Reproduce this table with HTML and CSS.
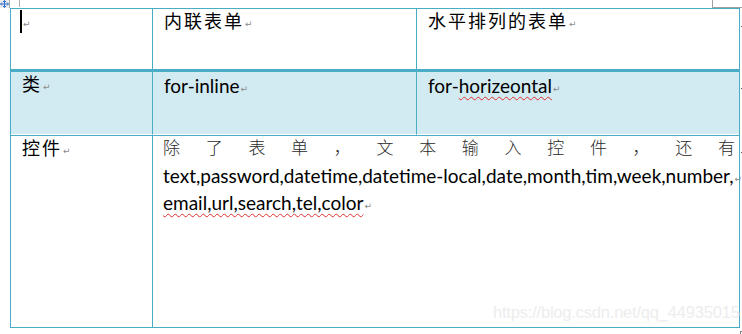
FILE: index.html
```html
<!DOCTYPE html>
<html lang="zh">
<head>
<meta charset="utf-8">
<title>表单</title>
<link rel="stylesheet" href="styles.css">
</head>
<body>
<div class="page">
  <div class="handle">
    <svg width="9" height="8" viewBox="0 0 9 8"><path d="M4.5 0.5 V7.5 M0.5 4 H8.5 M3 2 L4.5 0.5 L6 2 M3 6 L4.5 7.5 L6 6 M2 2.5 L0.5 4 L2 5.5 M7 2.5 L8.5 4 L7 5.5" stroke="#2f6fd0" stroke-width="1" fill="none"/></svg>
  </div>
  <div class="mark-tl"></div>
  <div class="mark-tr"></div>
  <div class="mark-br"></div>
  <div class="grid">
    <div class="cell r1"><span class="caret"></span><span class="pm cpm">↵</span></div>
    <div class="cell r1 cjk">内联表单<span class="pm">↵</span></div>
    <div class="cell r1 last cjk">水平排列的表单<span class="pm">↵</span></div>
    <div class="cell r2 cjk">类<span class="pm">↵</span></div>
    <div class="cell r2 lat">for-inline<span class="pm">↵</span></div>
    <div class="cell r2 last lat">for-<span class="wavy">horizeontal</span><span class="pm">↵</span></div>
    <div class="cell r3 cjk">控件<span class="pm">↵</span></div>
    <div class="cell r3 last wide">
      <div class="just"><span>除</span><span>了</span><span>表</span><span>单</span><span>，</span><span>文</span><span>本</span><span>输</span><span>入</span><span>控</span><span>件</span><span>，</span><span>还</span><span>有</span></div>
      <div class="lat line">text,password,datetime,datetime-local,date,month,tim,week,number,<span class="pm">↵</span></div>
      <div class="lat line"><span class="wavy">email,url,search,tel,color</span><span class="pm">↵</span></div>
    </div>
  </div>
  <span class="rowdot d1"></span>
  <span class="rowdot d2"></span>
  <span class="rowdot d3"></span>
  <div class="watermark">https://blog.csdn.net/qq_44935015</div>
</div>
</body>
</html>
```

FILE: styles.css
```css
html, body {
  margin: 0;
  padding: 0;
  background: #fff;
}
.page {
  position: relative;
  width: 742px;
  height: 334px;
  padding: 8px 0 0 10px;
  box-sizing: border-box;
  overflow: hidden;
}
.grid {
  display: grid;
  width: 730px;
  box-sizing: border-box;
  grid-template-columns: 142px 264px 1fr;
  grid-template-rows: 63px 63px 192px;
  border: 1px solid #4bacc6;
}
.cell {
  box-sizing: border-box;
  border-right: 1px solid #4bacc6;
  padding-left: 11px;
  color: #000;
  white-space: nowrap;
}
.cell.last { border-right: none; }
.r1 {
  border-bottom: 3px solid #4bacc6;
}
.r2 {
  background: #d2eaf1;
  border-bottom: 1px solid #fff;
}
.r3 {
  border-top: 1px solid #4bacc6;
}
.r2.lat { padding-top: 1px; }
.wide {
  grid-column: 2 / 4;
  padding-left: 10px;
  padding-right: 4px;
}
.cjk {
  font-family: "Noto Sans CJK SC", sans-serif;
  font-size: 18px;
  line-height: 22px;
  letter-spacing: 2px;
}
.lat {
  font-family: Lato, "Noto Sans CJK SC", sans-serif;
  font-size: 19px;
  line-height: 26px;
}
.line { line-height: 24px; }
.just {
  display: flex;
  justify-content: space-between;
  font-family: "Noto Sans CJK SC", sans-serif;
  font-size: 17px;
  line-height: 22px;
  margin-bottom: 6px;
  color: #2a2a2a;
  font-weight: 300;
}
.pm {
  font-family: "DejaVu Sans", sans-serif;
  font-size: 9px;
  color: #8a8a8a;
  letter-spacing: 0;
  vertical-align: 1px;
  margin-left: 1px;
}
.caret {
  display: inline-block;
  width: 2px;
  height: 23px;
  background: #000;
  vertical-align: top;
  margin-top: 1px;
  margin-left: -2px;
}
.cpm { vertical-align: top; position: relative; top: 10px; }
.wavy {
  text-decoration: underline wavy #e03030;
  text-decoration-thickness: 1px;
  text-underline-offset: 3px;
  text-decoration-skip-ink: none;
}
.handle {
  position: absolute;
  left: 0;
  top: 0;
  width: 9px;
  height: 8px;
  background: #ececec;
  border-right: 1px solid #a8a8a8;
  display: flex;
  align-items: center;
  justify-content: center;
  overflow: hidden;
}
.mark-tl {
  position: absolute;
  left: 19px;
  top: 0;
  width: 1px;
  height: 7px;
  background: #b0b0b0;
}
.mark-tr {
  position: absolute;
  left: 712px;
  top: 0;
  width: 30px;
  height: 7px;
  border-left: 1px solid #a0a0a0;
  border-bottom: 1px solid #a0a0a0;
}
.mark-br {
  position: absolute;
  left: 740px;
  top: 331px;
  width: 2px;
  height: 3px;
  border-left: 1px solid #808080;
  border-top: 1px solid #808080;
}
.rowdot {
  position: absolute;
  left: 741px;
  width: 1px;
  height: 1px;
  background: #555;
}
.d1 { top: 26px; }
.d2 { top: 88px; }
.d3 { top: 152px; }
.watermark {
  position: absolute;
  left: 493px;
  top: 303px;
  font-family: "Liberation Sans", Arial, sans-serif;
  font-size: 16.5px;
  letter-spacing: -0.2px;
  color: #ededed;
  white-space: nowrap;
}
```
